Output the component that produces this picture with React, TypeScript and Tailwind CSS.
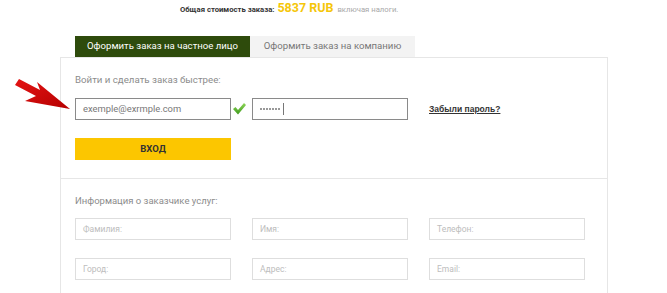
import React from 'react';

const font = { fontFamily: 'Roboto, "Liberation Sans", Arial, sans-serif' };

function Field({ placeholder }: { placeholder: string }) {
  return (
    <div className="w-[156px] h-[22px] border border-[#dedede] flex items-center pl-[7px] text-[8.5px] text-[#bdbdbd]">
      {placeholder}
    </div>
  );
}

function Check() {
  return (
    <svg width="13" height="12" viewBox="0 0 13 12" className="mx-[2px]">
      <defs>
        <linearGradient id="chk" x1="0" y1="0" x2="0" y2="1">
          <stop offset="0" stopColor="#8fd65a" />
          <stop offset="1" stopColor="#3e9a1c" />
        </linearGradient>
      </defs>
      <polygon points="0,6 2.5,4 5,7 11,0 13,2 5,11.5" fill="url(#chk)" />
    </svg>
  );
}

export default function App() {
  return (
    <div className="relative w-[667px] h-[293px] overflow-hidden bg-white" style={font}>
      {/* red pointer arrow */}
      <svg className="absolute left-0 top-0" width="80" height="120" viewBox="0 0 80 120">
        <defs>
          <linearGradient id="arr" x1="0" y1="0" x2="1" y2="1">
            <stop offset="0" stopColor="#e41414" />
            <stop offset="1" stopColor="#b50000" />
          </linearGradient>
        </defs>
        <polygon
          points="70,109 37,82 40,90 19,79 15,85 36,96 25,101"
          fill="url(#arr)"
        />
      </svg>

      <div className="pl-[180px] h-[36px] flex items-baseline whitespace-nowrap leading-[16px]">
        <span className="text-[7.7px] font-bold text-[#333]">Общая стоимость заказа:</span>
        <span className="ml-[3px] text-[12.5px] font-bold text-[#f5c60a]">5837 RUB</span>
        <span className="ml-[4px] text-[7.7px] text-[#a8a8a8]">включая налоги.</span>
      </div>

      <div className="ml-[75px] flex h-[21px] text-[9.6px]">
        <div className="w-[175px] bg-[#2e4b0c] text-white flex items-center justify-center">
          Оформить заказ на частное лицо
        </div>
        <div className="w-[165px] bg-[#f3f3f3] text-[#777] flex items-center justify-center">
          Оформить заказ на компанию
        </div>
      </div>

      <div className="ml-[60px] w-[548px] h-[260px] border border-[#e6e6e6]">
        <div className="px-[14px] pt-[15px] pb-[18px] border-b border-[#e6e6e6]">
          <div className="text-[9.7px] leading-[14px] text-[#8c8c8c]">Войти и сделать заказ быстрее:</div>
          <div className="mt-[11px] flex items-center">
            <div className="w-[156px] h-[22px] border border-[#8a8a8a] flex items-center pl-[7px] text-[9.4px] text-[#777]">
              exemple@exrmple.com
            </div>
            <Check />
            <div className="ml-[4px] w-[156px] h-[22px] border border-[#8a8a8a] flex items-center gap-[1.2px] pl-[7px]">
              {[0, 1, 2, 3, 4, 5, 6].map((i) => (
                <span key={i} className="w-[1.8px] h-[1.8px] rounded-full bg-[#777]" />
              ))}
              <span className="ml-[2px] w-px h-[12px] bg-[#777]" />
            </div>
            <a className="ml-[21px] text-[8.5px] font-bold text-[#333] underline" style={{ fontFamily: '"Liberation Sans", Arial, sans-serif' }}>
              Забыли пароль?
            </a>
          </div>
          <button className="mt-[18px] w-[156px] h-[22px] bg-[#fcc600] text-[9.5px] font-bold text-[#333] flex items-center justify-center">
            ВХОД
          </button>
        </div>

        <div className="px-[14px] pt-[15px]">
          <div className="text-[9.5px] leading-[14px] text-[#8c8c8c]">Информация о заказчике услуг:</div>
          <div className="mt-[10px] grid grid-cols-[156px_156px_156px] gap-x-[21px] gap-y-[18px]">
            <Field placeholder="Фамилия:" />
            <Field placeholder="Имя:" />
            <Field placeholder="Телефон:" />
            <Field placeholder="Город:" />
            <Field placeholder="Адрес:" />
            <Field placeholder="Email:" />
          </div>
        </div>
      </div>
    </div>
  );
}
